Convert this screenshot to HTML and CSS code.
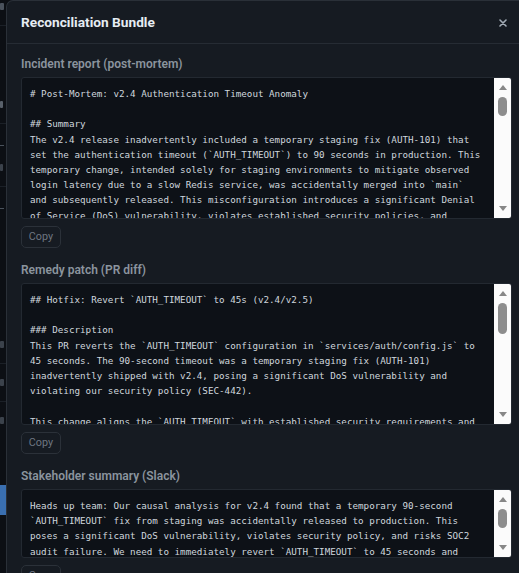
FILE: index.html
```html
<!DOCTYPE html>
<html lang="en">
<head>
<meta charset="utf-8">
<title>Reconciliation Bundle</title>
<link rel="stylesheet" href="styles.css">
</head>
<body>
<div class="page-edge" aria-hidden="true">
  <span class="edge-mark edge-m1"></span>
  <span class="edge-line"></span>
  <span class="edge-mark edge-m2"></span>
  <span class="edge-line"></span>
  <span class="edge-dash"></span>
  <span class="edge-mark edge-m3"></span>
  <span class="edge-line"></span>
  <span class="edge-dash"></span>
  <span class="edge-gap"></span>
  <span class="edge-mark edge-m4"></span>
  <span class="edge-line"></span>
  <span class="edge-mark edge-m5"></span>
  <span class="edge-line"></span>
  <span class="edge-mark edge-m6"></span>
  <span class="edge-btn"></span>
</div>
<div class="modal">
  <div class="modal-header">
    <h2 class="modal-title">Reconciliation Bundle</h2>
    <button class="close-btn" aria-label="Close"><svg width="8" height="8" viewBox="0 0 8 8"><path d="M1 1L7 7M7 1L1 7"/></svg></button>
  </div>
  <div class="modal-body">
    <section class="section">
      <label class="section-label">Incident report (post-mortem)</label>
      <div class="field-box field-tall">
        <textarea class="field" readonly># Post-Mortem: v2.4 Authentication Timeout Anomaly

## Summary
The v2.4 release inadvertently included a temporary staging fix (AUTH-101) that set the authentication timeout (`AUTH_TIMEOUT`) to 90 seconds in production. This temporary change, intended solely for staging environments to mitigate observed login latency due to a slow Redis service, was accidentally merged into `main` and subsequently released. This misconfiguration introduces a significant Denial of Service (DoS) vulnerability, violates established security policies, and jeopardizes our SOC2 compliance posture.

## Timeline
- 2024-05-02: AUTH-101 applied to staging to work around slow Redis responses.
- 2024-05-06: Staging branch merged into `main` without reverting AUTH-101.
- 2024-05-09: v2.4 released to production with `AUTH_TIMEOUT` set to 90 seconds.
- 2024-05-14: Causal analysis flagged the timeout drift during reconciliation.

## Root Cause
The staging-only override was committed to the shared configuration file rather than an environment-specific overlay, and the release checklist did not include a diff review of security-sensitive configuration values.

## Impact
- Authentication requests may hold connections for up to 90 seconds, allowing an attacker to exhaust the connection pool with a small number of clients.
- Violates security policy SEC-442, which caps `AUTH_TIMEOUT` at 45 seconds.
- Creates a finding that would cause a SOC2 audit failure if left unresolved.

## Remediation
1. Revert `AUTH_TIMEOUT` to 45 seconds in v2.4 and v2.5 (hotfix PR).
2. Move staging overrides into environment-specific configuration overlays.
3. Add a CI check that blocks changes to security-sensitive settings without sign-off from the security team.

## Action Items
- [ ] Ship the hotfix to production (owner: platform team).
- [ ] Fix the underlying Redis latency in staging (owner: infra team).</textarea>
        <div class="vscroll" aria-hidden="true">
          <span class="vscroll-btn vscroll-up"><svg width="8" height="5" viewBox="0 0 8 5"><path d="M4 0L8 5H0Z"/></svg></span>
          <span class="vscroll-track"><span class="vscroll-thumb thumb-s"></span></span>
          <span class="vscroll-btn vscroll-down"><svg width="8" height="5" viewBox="0 0 8 5"><path d="M0 0H8L4 5Z"/></svg></span>
        </div>
      </div>
      <button class="copy-btn">Copy</button>
    </section>
    <section class="section">
      <label class="section-label">Remedy patch (PR diff)</label>
      <div class="field-box field-tall">
        <textarea class="field" readonly>## Hotfix: Revert `AUTH_TIMEOUT` to 45s (v2.4/v2.5)

### Description
This PR reverts the `AUTH_TIMEOUT` configuration in `services/auth/config.js` to 45 seconds. The 90-second timeout was a temporary staging fix (AUTH-101) inadvertently shipped with v2.4, posing a significant DoS vulnerability and violating our security policy (SEC-442).

This change aligns the `AUTH_TIMEOUT` with established security requirements and restores compliance ahead of the upcoming SOC2 audit.

### Changes
--- a/services/auth/config.js
+++ b/services/auth/config.js
-  AUTH_TIMEOUT: 90, // TEMP: staging fix for slow Redis (AUTH-101)
+  AUTH_TIMEOUT: 45,

### Testing
- Unit tests for session expiry pass with the 45-second timeout.
- Verified login flow end-to-end in staging against the slow Redis service.

### Rollout
Backport to release/v2.4 and include in v2.5. No migration required.</textarea>
        <div class="vscroll" aria-hidden="true">
          <span class="vscroll-btn vscroll-up"><svg width="8" height="5" viewBox="0 0 8 5"><path d="M4 0L8 5H0Z"/></svg></span>
          <span class="vscroll-track"><span class="vscroll-thumb thumb-m"></span></span>
          <span class="vscroll-btn vscroll-down"><svg width="8" height="5" viewBox="0 0 8 5"><path d="M0 0H8L4 5Z"/></svg></span>
        </div>
      </div>
      <button class="copy-btn">Copy</button>
    </section>
    <section class="section">
      <label class="section-label">Stakeholder summary (Slack)</label>
      <div class="field-box field-short">
        <textarea class="field" readonly>Heads up team: Our causal analysis for v2.4 found that a temporary 90-second `AUTH_TIMEOUT` fix from staging was accidentally released to production. This poses a significant DoS vulnerability, violates security policy, and risks SOC2 audit failure. We need to immediately revert `AUTH_TIMEOUT` to 45 seconds and ship the hotfix in v2.4/v2.5. Post-mortem and PR are linked in the thread.</textarea>
        <div class="vscroll" aria-hidden="true">
          <span class="vscroll-btn vscroll-up"><svg width="8" height="5" viewBox="0 0 8 5"><path d="M4 0L8 5H0Z"/></svg></span>
          <span class="vscroll-track"><span class="vscroll-thumb thumb-s"></span></span>
          <span class="vscroll-btn vscroll-down"><svg width="8" height="5" viewBox="0 0 8 5"><path d="M0 0H8L4 5Z"/></svg></span>
        </div>
      </div>
      <button class="copy-btn">Copy</button>
    </section>
  </div>
</div>
</body>
</html>
```
FILE: styles.css
```css
html, body {
  margin: 0;
  height: 100%;
}

body {
  background: #0b0e13;
  overflow: hidden;
  display: flex;
  align-items: flex-start;
  font-family: Roboto, "Noto Sans", sans-serif;
}

/* dimmed page behind the dialog */
.page-edge {
  flex: none;
  width: 6px;
  height: 573px;
  overflow: hidden;
  display: flex;
  flex-direction: column;
  background: #0c0f14;
}

.edge-mark {
  display: block;
  width: 4px;
  height: 7px;
  margin: 6px 0 6px 0;
  background: #3b424b;
  border-radius: 1px;
}

.edge-m1 {
  margin-top: 3px;
  background: #4a525c;
}

.edge-m2 {
  margin-top: 66px;
  width: 3px;
  background: #58606a;
}

.edge-m3 {
  width: 3px;
}

.edge-m4 {
  margin-top: 20px;
}

.edge-line {
  display: block;
  height: 1px;
  background: #1b2027;
  margin: 9px 0;
}

.edge-dash {
  display: block;
  width: 4px;
  height: 1px;
  margin: 12px 0;
  background: #4a525c;
}

.edge-gap {
  display: block;
  height: 100px;
}

.edge-btn {
  display: block;
  margin-top: 55px;
  height: 30px;
  background: #3a6fb0;
}

/* dialog */
.modal {
  flex: none;
  width: 520px;
  height: 600px;
  box-sizing: border-box;
  background: #161b22;
  border: 1px solid #2a3038;
  border-right: none;
  border-radius: 7px 0 0 0;
}

.modal-header {
  height: 43px;
  box-sizing: border-box;
  display: flex;
  align-items: center;
  justify-content: space-between;
  padding: 0 14px;
  border-bottom: 1px solid #262c34;
}

.modal-title {
  margin: 0;
  font-size: 13.7px;
  font-weight: 700;
  color: #e6edf3;
}

.close-btn {
  display: flex;
  align-items: center;
  justify-content: center;
  width: 18px;
  height: 18px;
  margin-top: 2px;
  padding: 0;
  border: none;
  background: transparent;
}

.close-btn svg {
  stroke: #a3acb6;
  stroke-width: 1.6;
  stroke-linecap: round;
  fill: none;
}

.modal-body {
  padding: 12px 14px 0;
}

.section + .section {
  margin-top: 14px;
}

.section-label {
  display: block;
  height: 17px;
  line-height: 17px;
  margin-bottom: 4px;
  font-size: 12px;
  font-weight: 600;
  color: #8b949e;
}

.field-box {
  display: flex;
  box-sizing: border-box;
  border: 1px solid #232931;
  border-radius: 3px;
  background: #0d1117;
  overflow: hidden;
}

.field-tall {
  height: 142px;
}

.field-short {
  height: 69px;
}

.field {
  flex: 1;
  min-width: 0;
  height: 100%;
  box-sizing: border-box;
  margin: 0;
  padding: 8px 10px 8px 8px;
  border: none;
  resize: none;
  outline: none;
  overflow: hidden;
  background: transparent;
  color: #d0d7de;
  font-family: "DejaVu Sans Mono", monospace;
  font-size: 9.24px;
  line-height: 15.2px;
  white-space: pre-wrap;
}

.vscroll {
  flex: none;
  width: 17px;
  display: flex;
  flex-direction: column;
  background: #fbfbfb;
}

.vscroll-btn {
  flex: none;
  height: 17px;
  box-sizing: border-box;
  display: flex;
  justify-content: center;
  align-items: flex-start;
}

.vscroll-up {
  padding-top: 7px;
}

.vscroll-down {
  padding-top: 5px;
}

.vscroll-btn svg {
  display: block;
  fill: #878787;
}

.vscroll-track {
  flex: 1;
  min-height: 0;
  display: flex;
  justify-content: center;
  align-items: flex-start;
  padding-top: 2px;
}

.vscroll-thumb {
  display: block;
  width: 9px;
  border-radius: 5px;
  background: #8d8d8d;
}

.thumb-s {
  height: 19px;
}

.thumb-m {
  height: 31px;
}

.copy-btn {
  display: block;
  margin-top: 7px;
  width: 40px;
  height: 22px;
  padding: 0;
  box-sizing: border-box;
  border: 1px solid #2b3139;
  border-radius: 5px;
  background: #161b22;
  color: #6e7681;
  font-family: Roboto, "Noto Sans", sans-serif;
  font-size: 10.8px;
  line-height: 20px;
}
```
